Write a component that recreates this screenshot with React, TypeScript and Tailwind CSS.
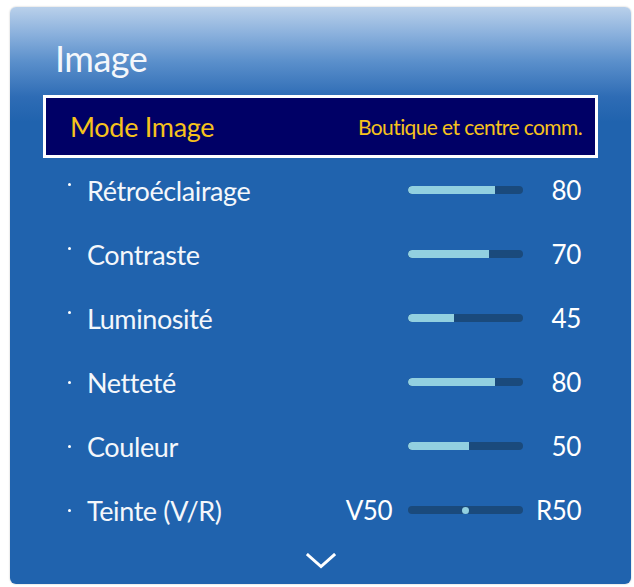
import React from "react";

type Row = { label: string; value?: number; fill?: number; raised: boolean; tint?: boolean };

const rows: Row[] = [
  { label: "Rétroéclairage", value: 80, fill: 76, raised: true },
  { label: "Contraste", value: 70, fill: 70, raised: true },
  { label: "Luminosité", value: 45, fill: 40, raised: true },
  { label: "Netteté", value: 80, fill: 76, raised: false },
  { label: "Couleur", value: 50, fill: 53, raised: false },
  { label: "Teinte (V/R)", raised: false, tint: true },
];

const font = { fontFamily: "Lato, 'Open Sans', sans-serif" };

function Slider({ fill }: { fill: number }) {
  return (
    <div className="relative w-[115px] h-[8px] rounded-full bg-[#1a4a7c] overflow-hidden">
      <div className="h-full rounded-l-full bg-[#92d0e0]" style={{ width: `${fill}%` }} />
    </div>
  );
}

function TintSlider() {
  return (
    <div className="relative w-[115px] h-[8px] rounded-full bg-[#1a4a7c] flex items-center justify-center">
      <div className="w-[7px] h-[7px] rounded-full bg-[#92d0e0]" />
    </div>
  );
}

export default function App() {
  return (
    <div className="w-[634px] h-[587px] bg-white pt-[7px] pl-[10px]" style={font}>
      <div className="w-[621px] h-[577px] rounded-[6px] bg-[linear-gradient(to_bottom,#b9d0ea_0px,#8eb3de_25px,#5a8fcb_55px,#2e6cb5_90px,#2063ae_115px,#2063ae_100%)] shadow-[0_0_2px_rgba(0,0,0,0.25)] text-white">
        <div className="h-[88px] pt-[33px] pl-[45px] text-[36px] leading-none tracking-[-0.5px] text-[#f4f7fb]">
          Image
        </div>
        <div className="mx-[33px] h-[63px] border-[3px] border-white bg-[#000066] flex items-center justify-between pl-[24px] pr-[13px]">
          <span className="text-[27px] text-[#f6c21c] tracking-[-0.3px] leading-none">Mode Image</span>
          <span className="text-[21px] text-[#f6c21c] tracking-[-0.6px] leading-none">Boutique et centre comm.</span>
        </div>
        {rows.map((r) => (
          <div key={r.label} className="h-[64px] flex items-center pl-[58px] pr-[50px]">
            <span className="w-[19px] flex">
              <span
                className={
                  r.raised
                    ? "w-[3px] h-[3px] rounded-full bg-white -translate-y-[6px]"
                    : "w-[3px] h-[3px] rounded-full bg-white"
                }
              />
            </span>
            <span className="flex-1 text-[27px] leading-none tracking-[-0.4px] text-[#f4f7fb]">{r.label}</span>
            {r.tint ? (
              <>
                <span className="mr-[16px] text-[26px] leading-none tracking-[-0.5px]">V50</span>
                <TintSlider />
                <span className="w-[58px] text-right text-[26px] leading-none tracking-[-0.5px]">R50</span>
              </>
            ) : (
              <>
                <Slider fill={r.fill ?? 0} />
                <span className="w-[58px] text-right text-[26px] leading-none tracking-[-0.3px]">{r.value}</span>
              </>
            )}
          </div>
        ))}
        <div className="flex justify-center pt-[11px]">
          <svg width="30" height="16" viewBox="0 0 30 16" fill="none">
            <path d="M2 2 L15 13.5 L28 2" stroke="white" strokeWidth="3" strokeLinecap="square" />
          </svg>
        </div>
      </div>
    </div>
  );
}
